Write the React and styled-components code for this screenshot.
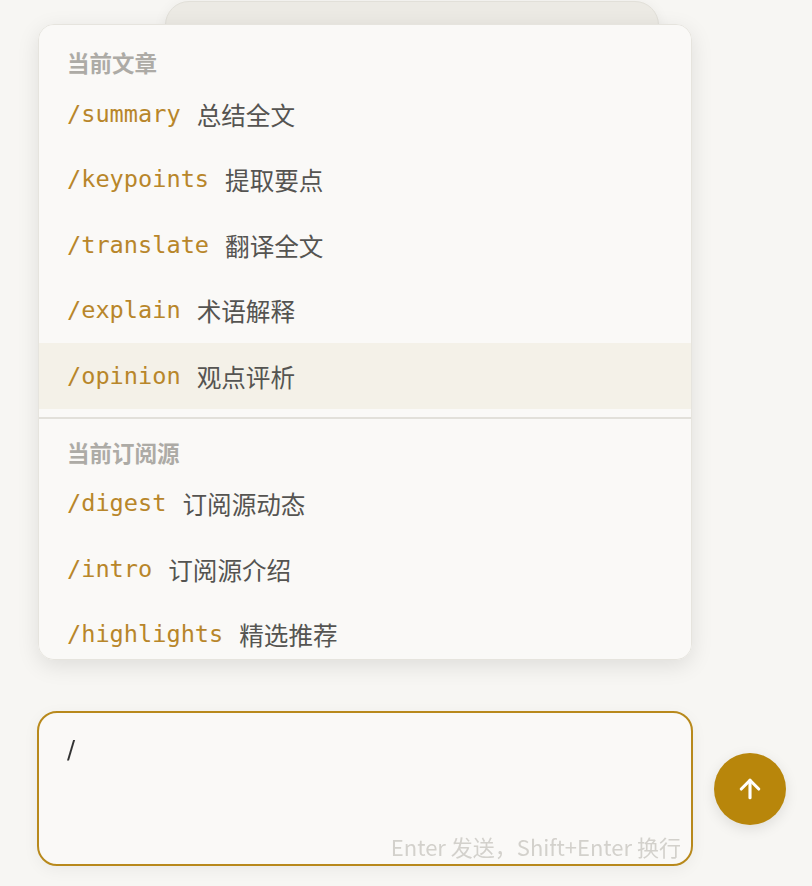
import React from 'react';
import styled, { createGlobalStyle } from 'styled-components';
import { ArrowUp } from 'lucide-react';

const GlobalStyle = createGlobalStyle`
  html, body {
    margin: 0;
    padding: 0;
    background: #f7f6f3;
    font-family: "Noto Sans CJK SC", "Noto Sans", sans-serif;
  }
`;

const Page = styled.div`
  height: 886px;
  display: flex;
  flex-direction: column;
  overflow: hidden;
`;

const Messages = styled.div`
  flex: 1;
  overflow: hidden;
`;

const Bubble = styled.div`
  margin: 1px 0 0 165px;
  width: 492px;
  height: 120px;
  background: #eceae4;
  border: 1px solid #e2e0d9;
  border-radius: 24px;
  box-shadow: 0 2px 14px rgba(0, 0, 0, 0.06);
`;

const Composer = styled.div`
  position: relative;
  display: flex;
  align-items: center;
  gap: 21px;
  padding: 0 26px 20px 37px;
`;

const Dropdown = styled.div`
  position: absolute;
  left: 38px;
  bottom: calc(100% + 51px);
  width: 654px;
  max-height: 636px;
  box-sizing: border-box;
  overflow-y: auto;
  scrollbar-width: none;
  padding-top: 4px;
  background: #faf9f7;
  border: 1px solid #e6e4de;
  border-radius: 16px;
  box-shadow: 0 6px 22px rgba(0, 0, 0, 0.1);
`;

const Section = styled.div`
  padding: 8px 0;
  border-top: ${p => (p.$divider ? '2px solid #e2e0da' : 'none')};
`;

const SectionTitle = styled.div`
  padding: 12px 28px 6px;
  font-size: 22.5px;
  line-height: 26px;
  font-weight: 700;
  color: #adaba6;
`;

const Item = styled.div`
  display: flex;
  align-items: center;
  height: 65.5px;
  padding: 0 29px 0 28px;
  background: ${p => (p.$active ? '#f4f1e8' : 'transparent')};
`;

const Command = styled.span`
  font-family: "DejaVu Sans Mono", "Liberation Mono", monospace;
  font-size: 23.6px;
  color: #b8862a;
  margin-right: 16px;
`;

const Label = styled.span`
  font-size: 24.6px;
  color: #555451;
`;

const InputBox = styled.div`
  position: relative;
  flex: 0 0 656px;
  height: 155px;
  box-sizing: border-box;
  border: 2px solid #b8891c;
  border-radius: 20px;
  background: #faf9f7;
  padding: 19px 28px;
  box-shadow: 0 4px 16px rgba(0, 0, 0, 0.05);
`;

const Typed = styled.div`
  font-family: "DejaVu Sans", sans-serif;
  font-size: 24px;
  line-height: 36px;
  color: #333;
`;

const Hint = styled.div`
  position: absolute;
  right: 10px;
  bottom: 2px;
  font-size: 22px;
  color: #d3d1cc;
`;

const SendButton = styled.button`
  width: 72px;
  height: 72px;
  border: none;
  border-radius: 50%;
  background: #b8860b;
  color: #fff;
  display: flex;
  align-items: center;
  justify-content: center;
  box-shadow: 0 4px 14px rgba(0, 0, 0, 0.1);
  padding: 0;
`;

const sections = [
  {
    title: '当前文章',
    items: [
      ['/summary', '总结全文'],
      ['/keypoints', '提取要点'],
      ['/translate', '翻译全文'],
      ['/explain', '术语解释'],
      ['/opinion', '观点评析'],
    ],
  },
  {
    title: '当前订阅源',
    items: [
      ['/digest', '订阅源动态'],
      ['/intro', '订阅源介绍'],
      ['/highlights', '精选推荐'],
    ],
  },
];

export default function App() {
  return (
    <Page>
      <GlobalStyle />
      <Messages>
        <Bubble />
      </Messages>
      <Composer>
        <Dropdown>
          {sections.map((s, i) => (
            <Section key={s.title} $divider={i > 0}>
              <SectionTitle>{s.title}</SectionTitle>
              {s.items.map(([cmd, label]) => (
                <Item key={cmd} $active={cmd === '/opinion'}>
                  <Command>{cmd}</Command>
                  <Label>{label}</Label>
                </Item>
              ))}
            </Section>
          ))}
        </Dropdown>
        <InputBox>
          <Typed>/</Typed>
          <Hint>Enter 发送，Shift+Enter 换行</Hint>
        </InputBox>
        <SendButton>
          <ArrowUp size={30} strokeWidth={2.5} />
        </SendButton>
      </Composer>
    </Page>
  );
}
